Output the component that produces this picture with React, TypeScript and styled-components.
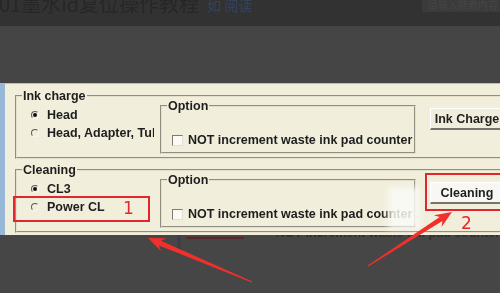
import React from 'react'
import styled, { createGlobalStyle } from 'styled-components'

const GlobalStyle = createGlobalStyle`
  html, body {
    margin: 0;
    padding: 0;
    background: #464646;
    overflow: hidden;
  }
  #root {
    width: 500px;
    height: 293px;
  }
`

const Page = styled.div`
  position: relative;
  width: 500px;
  height: 293px;
  display: flex;
  flex-direction: column;
  overflow: hidden;
  background: #464646;
  font-family: 'Liberation Sans', Arial, sans-serif;
  filter: blur(0.35px);
`

const TopBar = styled.header`
  flex: none;
  height: 26px;
  display: flex;
  align-items: flex-start;
  background: #323232;
  overflow: hidden;
`

const Title = styled.h1`
  margin: -7px 0 0 -1px;
  font: 400 20px/22px 'Noto Sans CJK SC', sans-serif;
  color: #272727;
  white-space: nowrap;
`

const TitleLink = styled.span`
  margin: -4px 0 0 8px;
  font: 400 14px/18px 'Noto Sans CJK SC', sans-serif;
  color: #33435f;
  white-space: nowrap;
`

const SearchBox = styled.div`
  margin-left: auto;
  width: 72px;
  height: 12px;
  padding-left: 6px;
  background: #3b3b3b;
  color: #464646;
  font: 10px/10px 'Noto Sans CJK SC', sans-serif;
  white-space: nowrap;
  overflow: hidden;
`

const Backdrop = styled.div`
  flex: none;
  height: 57px;
  background: #454545;
`

const Dialog = styled.section`
  position: relative;
  z-index: 1;
  flex: none;
  width: 560px;
  height: 152px;
  box-sizing: border-box;
  padding: 5px 0 2px 10px;
  display: flex;
  flex-direction: column;
  gap: 4px;
  background: #f1eedb;
  border-left: 5px solid #98b8d8;
  border-top: 1px solid #bcbcb4;
  color: #1e1e1e;
  font-size: 12.5px;
  font-weight: 700;
`

const GroupBox = styled.fieldset`
  margin: 0;
  padding: 0 0 0 14px;
  min-width: 0;
  height: 70px;
  box-sizing: border-box;
  border: 2px groove #e4e0cc;
  display: grid;
  grid-template-columns: 124px 265px 73px;
  column-gap: 5px;
  align-items: start;
`

const Legend = styled.legend<{ $indent: number }>`
  margin-left: ${p => p.$indent}px;
  padding: 0 1px;
  line-height: 14px;
`

const RadioList = styled.div`
  width: 123px;
  padding-top: 3px;
  display: flex;
  flex-direction: column;
  overflow: hidden;
`

const RadioRow = styled.label`
  height: 18px;
  display: flex;
  align-items: center;
  gap: 8px;
  white-space: nowrap;
`

const RadioDot = styled.span<{ $checked?: boolean }>`
  position: relative;
  flex: none;
  width: 8px;
  height: 8px;
  box-sizing: border-box;
  border-radius: 50%;
  border: 1px solid;
  border-color: #5f5d57 #f8f7f0 #f8f7f0 #5f5d57;
  &::after {
    content: '';
    display: ${p => (p.$checked ? 'block' : 'none')};
    position: absolute;
    left: 1px;
    top: 1px;
    width: 4px;
    height: 4px;
    border-radius: 50%;
    background: #111;
  }
`

const OptionBox = styled.fieldset`
  margin: -4px 0 0;
  padding: 20px 0 0 10px;
  min-width: 0;
  width: 256px;
  height: 55px;
  box-sizing: border-box;
  border: 2px groove #e4e0cc;
`

const CheckRow = styled.label`
  height: 14px;
  display: flex;
  align-items: center;
  gap: 5px;
  white-space: nowrap;
  overflow: hidden;
`

const CheckBox = styled.span`
  flex: none;
  width: 11px;
  height: 11px;
  box-sizing: border-box;
  border: 1px solid;
  border-color: #7c7a72 #e2e0d6 #e2e0d6 #7c7a72;
  background: #fbfaf5;
`

const ActionButton = styled.button<{ $lit?: boolean }>`
  margin-top: 5px;
  width: 73px;
  height: 22px;
  padding: 0;
  border: 0;
  border-top: 1px solid #ffffff;
  border-left: 1px solid #ffffff;
  border-bottom: 2px solid #76746c;
  background: ${p => (p.$lit ? '#f8f7f3' : '#f0eddc')};
  font: inherit;
  color: inherit;
  text-align: center;
  white-space: nowrap;
`

const Below = styled.div`
  flex: 1;
  margin-top: -9px;
  display: flex;
  align-items: flex-start;
  background: #464646;
`

const GhostStrip = styled.div`
  margin-left: 177px;
  width: 8px;
  height: 29px;
  background: #3d3f44;
`

const GhostFrame = styled.div`
  margin-left: 5px;
  width: 108px;
  height: 13px;
  box-sizing: border-box;
  border-bottom: 2px solid #5e2626;
`

const GhostText = styled.div`
  margin-left: 32px;
  color: #2e2e2e;
  font-size: 12.5px;
  font-weight: 700;
  line-height: 14px;
  white-space: nowrap;
`

const Mark = styled.div<{ $x: number; $y: number; $w: number; $h: number }>`
  position: absolute;
  left: ${p => p.$x}px;
  top: ${p => p.$y}px;
  width: ${p => p.$w}px;
  height: ${p => p.$h}px;
  box-sizing: border-box;
  border: 2px solid #e3262c;
  z-index: 3;
  pointer-events: none;
`

const MarkNumber = styled.span<{ $x: number; $y: number }>`
  position: absolute;
  left: ${p => p.$x}px;
  top: ${p => p.$y}px;
  z-index: 3;
  font: 400 17px/17px 'DejaVu Sans', sans-serif;
  color: #e22a2a;
`

const Smudge = styled.div`
  position: absolute;
  left: 388px;
  top: 187px;
  width: 32px;
  height: 42px;
  z-index: 2;
  background: rgba(250, 250, 247, 0.85);
  filter: blur(3px);
`

const ArrowLayer = styled.svg`
  position: absolute;
  left: 0;
  top: 0;
  z-index: 4;
  pointer-events: none;
`

function Radio({ label, checked }: { label: string; checked?: boolean }) {
  return (
    <RadioRow>
      <RadioDot $checked={checked} />
      {label}
    </RadioRow>
  )
}

function Option() {
  return (
    <OptionBox>
      <Legend $indent={-5}>Option</Legend>
      <CheckRow>
        <CheckBox />
        NOT increment waste ink pad counter
      </CheckRow>
    </OptionBox>
  )
}

export default function App() {
  return (
    <>
      <GlobalStyle />
      <Page>
        <TopBar>
          <Title>01墨水id复位操作教程</Title>
          <TitleLink>如 阅读</TitleLink>
          <SearchBox>请输入搜索内容</SearchBox>
        </TopBar>
        <Backdrop />
        <Dialog>
          <GroupBox>
            <Legend $indent={-9}>Ink charge</Legend>
            <RadioList>
              <Radio label="Head" checked />
              <Radio label="Head, Adapter, Tube" />
            </RadioList>
            <Option />
            <ActionButton>Ink Charge</ActionButton>
          </GroupBox>
          <GroupBox>
            <Legend $indent={-9}>Cleaning</Legend>
            <RadioList>
              <Radio label="CL3" checked />
              <Radio label="Power CL" />
            </RadioList>
            <Option />
            <ActionButton $lit>Cleaning</ActionButton>
          </GroupBox>
        </Dialog>
        <Below>
          <GhostStrip />
          <GhostFrame />
          <GhostText>NOT increment waste ink pad counter</GhostText>
        </Below>

        <Smudge />
        <Mark $x={13} $y={196} $w={137} $h={26} />
        <MarkNumber $x={123} $y={200}>1</MarkNumber>
        <Mark $x={425} $y={173} $w={90} $h={38} />
        <MarkNumber $x={461} $y={215}>2</MarkNumber>

        <ArrowLayer width="500" height="293" viewBox="0 0 500 293">
          <polygon
            fill="#f0302c"
            points="148,238 166.4,238.2 161,240.8 252.2,281.5 251.8,282.6 159,245.4 160.9,251.1"
          />
          <polygon
            fill="#f0302c"
            points="452,212 441.5,227.1 442.4,221.1 368.3,266.5 367.7,265.5 439.7,216.9 433.9,215.3"
          />
        </ArrowLayer>
      </Page>
    </>
  )
}
